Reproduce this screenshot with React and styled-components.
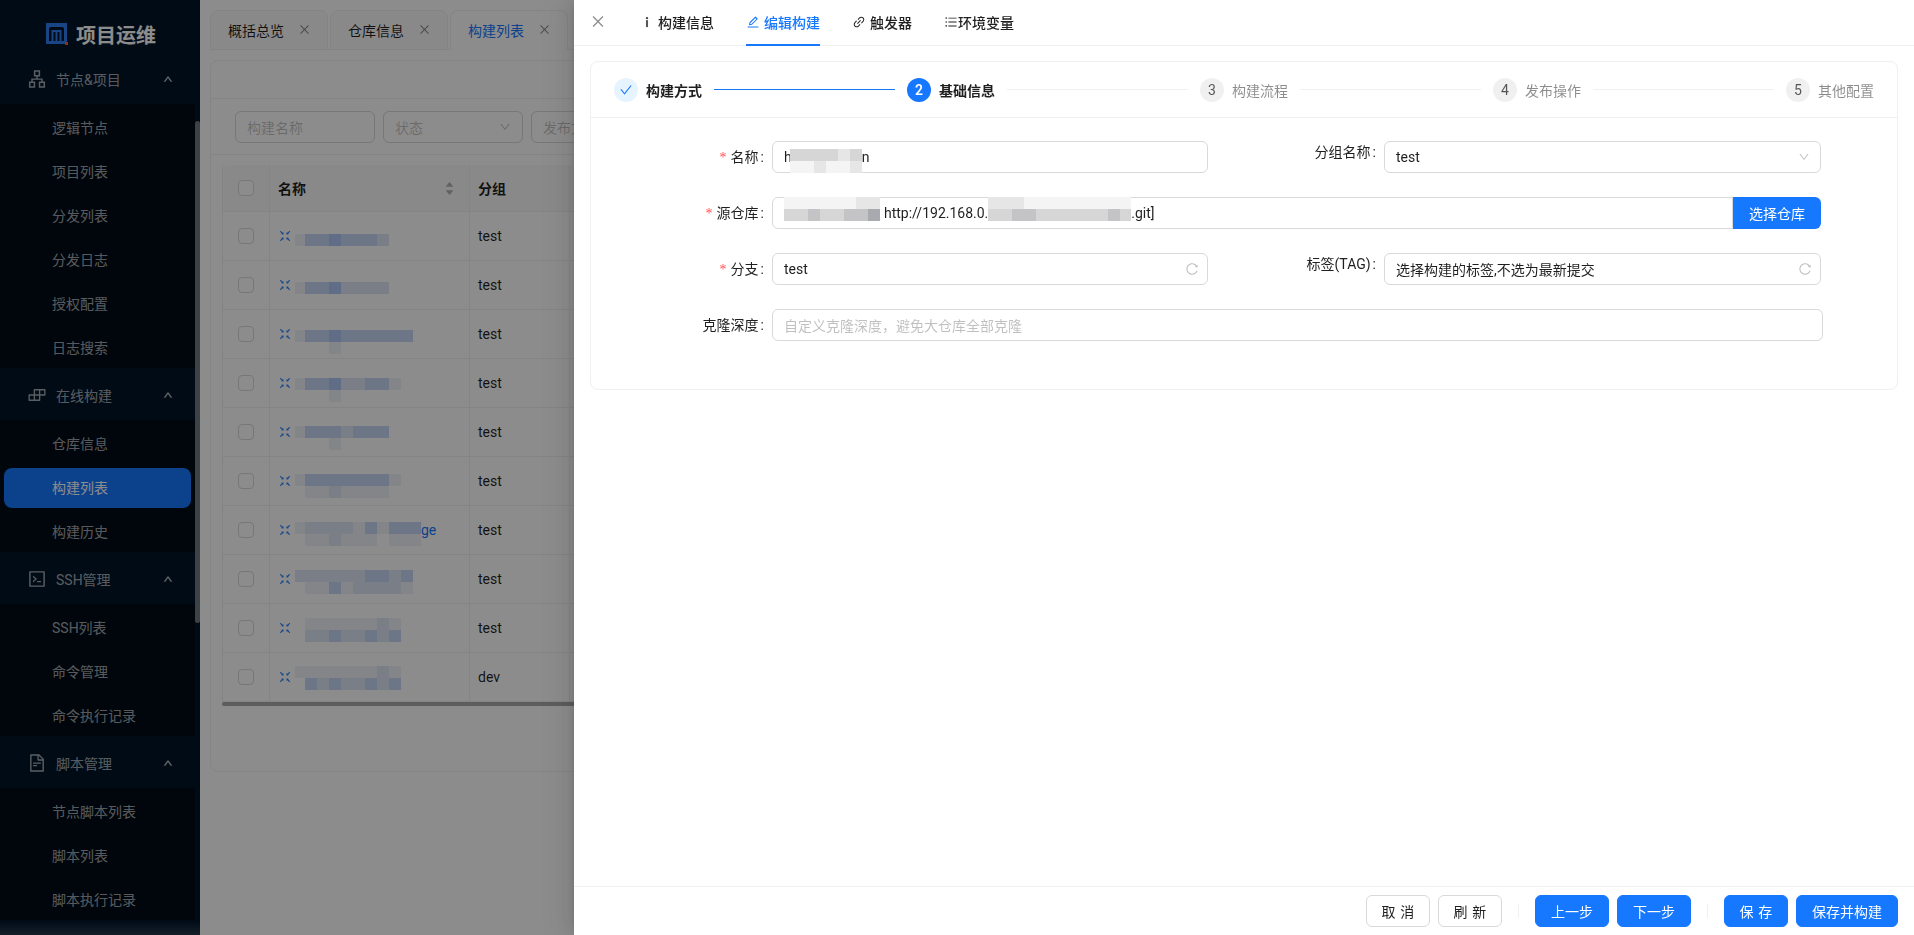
import styled, { createGlobalStyle } from "styled-components";
import {
  AiOutlineApartment,
  AiOutlineBuild,
  AiOutlineCheck,
  AiOutlineClose,
  AiOutlineCode,
  AiOutlineDown,
  AiOutlineEdit,
  AiOutlineFileText,
  AiOutlineFullscreenExit,
  AiOutlineInfo,
  AiOutlineLink,
  AiOutlineReload,
  AiOutlineUnorderedList,
  AiOutlineUp,
  AiFillCaretUp,
  AiFillCaretDown,
} from "react-icons/ai";

const GlobalStyle = createGlobalStyle`
  html, body {
    margin: 0;
    padding: 0;
    height: 100%;
    overflow: hidden;
    background: #fff;
    font-family: Roboto, "Noto Sans CJK SC", sans-serif;
    font-size: 14px;
    color: rgba(0, 0, 0, 0.88);
  }
  * {
    box-sizing: border-box;
  }
`;

const BLUE_LEVELS = ["transparent", "#eef2fa", "#dde6f6", "#c6d7f6", "#aec6f6"];
const GRAY_LEVELS = ["transparent", "#f4f4f4", "#e6e6e6", "#d6d6d6", "#c4c4c6", "#a9a9b0"];

const menuGroups = [
  {
    title: "节点&项目",
    icon: AiOutlineApartment,
    items: ["逻辑节点", "项目列表", "分发列表", "分发日志", "授权配置", "日志搜索"],
  },
  {
    title: "在线构建",
    icon: AiOutlineBuild,
    items: ["仓库信息", "构建列表", "构建历史"],
  },
  {
    title: "SSH管理",
    icon: AiOutlineCode,
    items: ["SSH列表", "命令管理", "命令执行记录"],
  },
  {
    title: "脚本管理",
    icon: AiOutlineFileText,
    items: ["节点脚本列表", "脚本列表", "脚本执行记录"],
  },
];

const pageTabs = [
  { label: "概括总览" },
  { label: "仓库信息" },
  { label: "构建列表", active: true },
];

const tableRows = [
  { group: "test", top: 22, lines: [[1, 3, 3, 4, 3, 3, 3, 2]] },
  { group: "test", top: 21, lines: [[1, 3, 3, 4, 2, 2, 2, 2]] },
  { group: "test", top: 20, lines: [[1, 3, 3, 4, 3, 3, 3, 3, 3, 3], [0, 0, 0, 1]] },
  { group: "test", top: 19, lines: [[1, 3, 3, 4, 2, 2, 3, 3, 1], [0, 0, 0, 1]] },
  { group: "test", top: 18, lines: [[1, 3, 3, 3, 2, 3, 3, 3], [0, 0, 0, 1]] },
  { group: "test", top: 17, lines: [[1, 3, 3, 3, 3, 3, 3, 3, 1], [0, 1, 1, 2, 1, 1, 1, 1]] },
  {
    group: "test",
    top: 16,
    suffix: "ge",
    lines: [[1, 2, 2, 2, 2, 1, 3, 1, 3, 3, 3], [0, 1, 1, 2, 1, 1, 1, 0, 1, 1, 1]],
  },
  { group: "test", top: 15, lines: [[2, 2, 2, 2, 2, 2, 3, 3, 2, 3], [0, 1, 1, 3, 1, 2, 2, 2, 2, 1]] },
  { group: "test", top: 14, lines: [[0, 1, 1, 1, 1, 1, 1, 2, 1], [0, 2, 2, 3, 2, 2, 3, 2, 3]] },
  { group: "dev", top: 13, lines: [[1, 1, 1, 1, 1, 1, 1, 2, 1], [0, 3, 2, 3, 2, 2, 3, 2, 3]] },
];

const steps = [
  { title: "构建方式", status: "done" },
  { title: "基础信息", status: "active" },
  { title: "构建流程", status: "wait" },
  { title: "发布操作", status: "wait" },
  { title: "其他配置", status: "wait" },
];

const Page = styled.div`
  display: flex;
  height: 100vh;
  overflow: hidden;
`;

const Sidebar = styled.aside`
  position: relative;
  flex: 0 0 200px;
  height: 100%;
  overflow: hidden;
  background: #001529;
  &::after {
    content: "";
    position: absolute;
    left: 0;
    right: 0;
    bottom: 0;
    height: 14px;
    background: linear-gradient(to bottom, transparent, rgba(255, 255, 255, 0.16));
  }
`;

const Brand = styled.div`
  display: flex;
  align-items: center;
  height: 56px;
  padding: 12px 0 0 46px;
  gap: 8px;
  color: #fff;
  font-size: 20px;
  font-weight: 700;
`;

const Menu = styled.nav`
  width: 195px;
`;

const GroupTitle = styled.div`
  display: flex;
  align-items: center;
  height: 48px;
  padding: 0 0 2px 27px;
  color: rgba(255, 255, 255, 0.65);
  & > svg:first-child {
    font-size: 20px;
    margin-right: 9px;
  }
  span {
    flex: 1;
  }
  & > svg:last-child {
    font-size: 10px;
    margin-right: 22px;
    stroke: currentColor;
    stroke-width: 70;
  }
`;

const SubMenu = styled.div`
  padding: 4px 4px 0;
  background: #000c17;
`;

const MenuItem = styled.div`
  display: flex;
  align-items: center;
  height: 40px;
  margin-bottom: 4px;
  padding: 0 0 2px 48px;
  width: 187px;
  border-radius: 8px;
  color: ${(p) => (p.$active ? "#fff" : "rgba(255, 255, 255, 0.65)")};
  background: ${(p) => (p.$active ? "#1677ff" : "transparent")};
`;

const ScrollThumb = styled.div`
  position: absolute;
  top: 121px;
  left: 195px;
  width: 5px;
  height: 502px;
  border-radius: 3px;
  background: #6f7882;
`;

const Main = styled.main`
  flex: 1;
  min-width: 0;
  padding: 10px 0 0 10px;
`;

const TabBar = styled.div`
  display: flex;
  gap: 2px;
  height: 40px;
  border-bottom: 1px solid #f0f0f0;
`;

const PageTab = styled.div`
  display: flex;
  align-items: center;
  width: 118px;
  height: 40px;
  padding: 0 0 1px 17px;
  border: 1px solid #f0f0f0;
  border-radius: 8px 8px 0 0;
  color: ${(p) => (p.$active ? "#1677ff" : "rgba(0, 0, 0, 0.88)")};
  background: ${(p) => (p.$active ? "#fff" : "#fafafa")};
  border-bottom-color: ${(p) => (p.$active ? "#fff" : "#f0f0f0")};
  svg {
    margin-left: 14px;
    font-size: 13px;
    color: rgba(0, 0, 0, 0.45);
  }
`;

const ListCard = styled.section`
  height: 712px;
  margin-top: 10px;
  border: 1px solid #f0f0f0;
  border-radius: 8px;
  overflow: hidden;
`;

const ListHead = styled.div`
  height: 38px;
  border-bottom: 1px solid #f0f0f0;
`;

const SearchBar = styled.div`
  display: flex;
  align-items: center;
  gap: 8px;
  height: 56px;
  padding-left: 24px;
  border-bottom: 1px solid #f0f0f0;
`;

const SearchBox = styled.div`
  display: flex;
  align-items: center;
  justify-content: space-between;
  flex: 0 0 140px;
  height: 32px;
  padding: 0 11px;
  border: 1px solid #d9d9d9;
  border-radius: 6px;
  color: rgba(0, 0, 0, 0.25);
  svg {
    font-size: 12px;
  }
`;

const Table = styled.div`
  margin: 10px 0 0 11px;
  width: 700px;
`;

const HeadRow = styled.div`
  display: grid;
  grid-template-columns: 48px 200px 100px 1fr;
  height: 47px;
  background: #fafafa;
  border-radius: 8px 0 0 0;
  font-weight: 600;
  border-bottom: 1px solid #f0f0f0;
`;

const BodyRow = styled.div`
  display: grid;
  grid-template-columns: 48px 200px 100px 1fr;
  height: 49px;
  border-bottom: 1px solid #f0f0f0;
`;

const Cell = styled.div`
  display: flex;
  align-items: center;
  padding: 0 8px;
  border-right: 1px solid #f0f0f0;
  &:first-child {
    justify-content: center;
    border-left: 1px solid #f0f0f0;
  }
`;

const NameCell = styled(Cell)`
  color: #1677ff;
  font-weight: 400;
  white-space: nowrap;
  & > svg:first-child {
    flex: 0 0 auto;
    font-size: 14px;
    margin-right: 3px;
  }
`;

const SortIcons = styled.span`
  display: flex;
  flex-direction: column;
  margin-left: auto;
  margin-right: 6px;
  font-size: 11px;
  line-height: 0;
  color: rgba(0, 0, 0, 0.29);
  svg + svg {
    margin-top: -3px;
  }
`;

const Checkbox = styled.span`
  display: block;
  width: 16px;
  height: 16px;
  border: 1px solid #d9d9d9;
  border-radius: 4px;
  background: #fff;
`;

const TableScroll = styled.div`
  height: 4px;
  border-radius: 2px;
  background: #a9a9a9;
`;

const MosaicSvg = styled.svg`
  display: block;
  flex: 0 0 auto;
  margin-top: ${(p) => p.$offset || 0}px;
  margin-left: ${(p) => p.$shift || 0}px;
  align-self: ${(p) => (p.$alignTop ? "flex-start" : "auto")};
`;

// blurred out text in the reference: rows of 12px blocks
const Mosaic = ({ lines, top = 0, width, height, levels, firstX = 0, offset, shift, alignTop }) => (
  <MosaicSvg width={width} height={height} $offset={offset} $shift={shift} $alignTop={alignTop}>
    {lines.map((line, row) =>
      line.map((level, col) =>
        level ? (
          <rect
            key={`${row}-${col}`}
            x={firstX + col * 12}
            y={top + row * 12}
            width="12"
            height="12"
            fill={levels[level]}
          />
        ) : null
      )
    )}
  </MosaicSvg>
);

const Mask = styled.div`
  position: fixed;
  inset: 0;
  background: rgba(0, 0, 0, 0.45);
`;

const Drawer = styled.div`
  position: fixed;
  top: 0;
  right: 0;
  bottom: 0;
  width: 1340px;
  display: flex;
  flex-direction: column;
  background: #fff;
  box-shadow: -6px 0 16px 0 rgba(0, 0, 0, 0.08), -3px 0 6px -4px rgba(0, 0, 0, 0.12),
    -9px 0 28px 8px rgba(0, 0, 0, 0.05);
`;

const DrawerHead = styled.header`
  display: flex;
  align-items: flex-start;
  flex: 0 0 46px;
  padding-left: 16px;
  border-bottom: 1px solid #f0f0f0;
`;

const CloseButton = styled.span`
  display: flex;
  align-items: center;
  width: 16px;
  height: 45px;
  margin-right: 38px;
  padding-bottom: 2px;
  font-size: 17px;
  color: rgba(0, 0, 0, 0.45);
`;

const DrawerTab = styled.div`
  display: flex;
  align-items: center;
  height: 46px;
  margin: 0 32px -1px 0;
  font-weight: 500;
  color: ${(p) => (p.$active ? "#1677ff" : "rgba(0, 0, 0, 0.88)")};
  border-bottom: 2px solid ${(p) => (p.$active ? "#1677ff" : "transparent")};
  svg {
    font-size: 14px;
    margin-right: ${(p) => (p.$tight ? 0 : 4)}px;
  }
`;

const InfoIcon = styled(AiOutlineInfo)`
  transform: translateX(-4px);
  stroke: currentColor;
  stroke-width: 30;
`;

const DrawerBody = styled.div`
  flex: 1;
  padding: 15px 16px 0;
`;

const EditCard = styled.section`
  border: 1px solid #f0f0f0;
  border-radius: 8px;
`;

const StepsBar = styled.div`
  display: flex;
  align-items: center;
  height: 56px;
  padding: 0 23px;
  border-bottom: 1px solid #f0f0f0;
`;

const Step = styled.div`
  display: flex;
  align-items: center;
  flex: ${(p) => (p.$last ? "0 0 auto" : "1")};
`;

const StepDot = styled.span`
  display: flex;
  align-items: center;
  justify-content: center;
  flex: 0 0 24px;
  height: 24px;
  margin-right: 8px;
  border-radius: 50%;
  font-size: 14px;
  font-weight: ${(p) => (p.$status === "active" ? 600 : 400)};
  color: ${(p) =>
    p.$status === "done" ? "#1677ff" : p.$status === "active" ? "#fff" : "rgba(0, 0, 0, 0.65)"};
  background: ${(p) =>
    p.$status === "done" ? "#e6f4ff" : p.$status === "active" ? "#1677ff" : "rgba(0, 0, 0, 0.06)"};
`;

const StepTitle = styled.span`
  font-weight: ${(p) => (p.$status === "wait" ? 400 : 600)};
  color: ${(p) => (p.$status === "wait" ? "rgba(0, 0, 0, 0.45)" : "rgba(0, 0, 0, 0.88)")};
  white-space: nowrap;
`;

const StepLine = styled.span`
  flex: 1;
  height: 1px;
  margin: 0 12px;
  background: ${(p) => (p.$status === "done" ? "#1677ff" : "rgba(5, 5, 5, 0.06)")};
`;

const Form = styled.div`
  padding: 23px 23px 24px;
`;

const FormRow = styled.div`
  display: flex;
  align-items: flex-start;
  height: 32px;
  margin-bottom: 24px;
`;

const Label = styled.label`
  flex: 0 0 ${(p) => p.$width}px;
  margin-right: 8px;
  text-align: right;
  white-space: nowrap;
  line-height: ${(p) => (p.$top ? 22 : 32)}px;
  &::after {
    content: ":";
    margin-left: 2px;
  }
`;

const Required = styled.span`
  margin-right: 4px;
  color: #ff4d4f;
  font-family: "Liberation Serif", serif;
`;

const Field = styled.div`
  display: flex;
  align-items: center;
  flex: 0 0 ${(p) => p.$width}px;
  height: 32px;
  padding: 0 11px;
  border: 1px solid #d9d9d9;
  border-radius: ${(p) => (p.$joined ? "6px 0 0 6px" : "6px")};
  white-space: nowrap;
`;

const FieldIcon = styled.span`
  display: flex;
  margin-left: auto;
  margin-right: ${(p) => (p.$small ? -1 : -3)}px;
  font-size: ${(p) => (p.$small ? 12 : 14)}px;
  color: rgba(0, 0, 0, 0.25);
`;

const Placeholder = styled.span`
  color: rgba(0, 0, 0, 0.25);
`;

const PickButton = styled.button`
  flex: 0 0 88px;
  height: 32px;
  padding: 0;
  border: 0;
  border-radius: 0 6px 6px 0;
  color: #fff;
  background: #1677ff;
  font: inherit;
`;

const Footer = styled.footer`
  display: flex;
  justify-content: flex-end;
  align-items: center;
  gap: 8px;
  flex: 0 0 49px;
  padding: 0 16px;
  border-top: 1px solid #f0f0f0;
`;

const Button = styled.button`
  width: ${(p) => p.$width}px;
  height: 32px;
  padding: 0;
  border: 1px solid ${(p) => (p.$primary ? "#1677ff" : "#d9d9d9")};
  border-radius: 6px;
  color: ${(p) => (p.$primary ? "#fff" : "rgba(0, 0, 0, 0.88)")};
  background: ${(p) => (p.$primary ? "#1677ff" : "#fff")};
  font: inherit;
  white-space: nowrap;
  letter-spacing: ${(p) => (p.$spaced ? "0.34em" : "normal")};
  text-indent: ${(p) => (p.$spaced ? "0.34em" : 0)};
`;

const FooterDivider = styled.span`
  width: 1px;
  height: 14px;
  margin: 0 8px;
  background: rgba(5, 5, 5, 0.06);
`;

const Logo = () => (
  <svg width="22" height="22" viewBox="0 0 22 22">
    <rect width="21" height="21" fill="#2f7ff0" />
    <path d="M3 18V6a2 2 0 0 1 2-2h11a2 2 0 0 1 2 2v12z" fill="#001529" />
    <path d="M6.5 18V8h8v10M10.5 8v10" fill="none" stroke="#2f7ff0" strokeWidth="2" />
    <rect x="19" y="19" width="3" height="3" fill="#ff5a1f" />
  </svg>
);

export default function App() {
  return (
    <>
      <GlobalStyle />
      <Page>
        <Sidebar>
          <Brand>
            <Logo />
            项目运维
          </Brand>
          <Menu>
            {menuGroups.map((group) => (
              <div key={group.title}>
                <GroupTitle>
                  <group.icon />
                  <span>{group.title}</span>
                  <AiOutlineUp />
                </GroupTitle>
                <SubMenu>
                  {group.items.map((item) => (
                    <MenuItem key={item} $active={item === "构建列表"}>
                      {item}
                    </MenuItem>
                  ))}
                </SubMenu>
              </div>
            ))}
          </Menu>
          <ScrollThumb />
        </Sidebar>
        <Main>
          <TabBar>
            {pageTabs.map((tab) => (
              <PageTab key={tab.label} $active={tab.active}>
                {tab.label}
                <AiOutlineClose />
              </PageTab>
            ))}
          </TabBar>
          <ListCard>
            <ListHead />
            <SearchBar>
              <SearchBox>构建名称</SearchBox>
              <SearchBox>
                状态
                <AiOutlineDown />
              </SearchBox>
              <SearchBox>发布方式</SearchBox>
            </SearchBar>
            <Table>
              <HeadRow>
                <Cell>
                  <Checkbox />
                </Cell>
                <Cell>
                  名称
                  <SortIcons>
                    <AiFillCaretUp />
                    <AiFillCaretDown />
                  </SortIcons>
                </Cell>
                <Cell>分组</Cell>
                <Cell />
              </HeadRow>
              {tableRows.map((row, idx) => (
                <BodyRow key={idx}>
                  <Cell>
                    <Checkbox />
                  </Cell>
                  <NameCell>
                    <AiOutlineFullscreenExit />
                    <Mosaic
                      lines={row.lines}
                      top={row.top}
                      width={row.suffix ? 126 : 130}
                      height={48}
                      levels={BLUE_LEVELS}
                      firstX={-2}
                    />
                    {row.suffix}
                  </NameCell>
                  <Cell>{row.group}</Cell>
                  <Cell />
                </BodyRow>
              ))}
              <TableScroll />
            </Table>
          </ListCard>
        </Main>
      </Page>
      <Mask />
      <Drawer>
        <DrawerHead>
          <CloseButton>
            <AiOutlineClose />
          </CloseButton>
          <DrawerTab $tight>
            <InfoIcon />
            构建信息
          </DrawerTab>
          <DrawerTab $active>
            <AiOutlineEdit />
            编辑构建
          </DrawerTab>
          <DrawerTab>
            <AiOutlineLink />
            触发器
          </DrawerTab>
          <DrawerTab $tight>
            <AiOutlineUnorderedList />
            环境变量
          </DrawerTab>
        </DrawerHead>
        <DrawerBody>
          <EditCard>
            <StepsBar>
              {steps.map((step, idx) => {
                const last = idx === steps.length - 1;
                return (
                  <Step key={step.title} $last={last}>
                    <StepDot $status={step.status}>
                      {step.status === "done" ? <AiOutlineCheck size={14} /> : idx + 1}
                    </StepDot>
                    <StepTitle $status={step.status}>{step.title}</StepTitle>
                    {!last && <StepLine $status={step.status} />}
                  </Step>
                );
              })}
            </StepsBar>
            <Form>
              <FormRow>
                <Label $width={150}>
                  <Required>*</Required>名称
                </Label>
                <Field $width={436}>
                  h
                  <Mosaic
                    lines={[
                      [3, 3, 3, 3, 2, 3],
                      [1, 1, 2, 1, 1, 2],
                    ]}
                    width={72}
                    height={24}
                    levels={GRAY_LEVELS}
                    offset={7}
                    shift={-2}
                    alignTop
                  />
                  n
                </Field>
                <Label $width={168} $top>
                  分组名称
                </Label>
                <Field $width={437}>
                  test
                  <FieldIcon $small>
                    <AiOutlineDown />
                  </FieldIcon>
                </Field>
              </FormRow>
              <FormRow>
                <Label $width={150}>
                  <Required>*</Required>源仓库
                </Label>
                <Field $width={961} $joined>
                  <Mosaic
                    lines={[
                      [1, 1, 1, 1, 1, 1, 2, 2],
                      [3, 3, 4, 3, 3, 4, 4, 5],
                    ]}
                    width={100}
                    height={24}
                    levels={GRAY_LEVELS}
                    offset={-1}
                    alignTop
                  />
                  http://192.168.0.
                  <Mosaic
                    lines={[
                      [2, 2, 2, 1, 1, 1, 1, 1, 1, 1, 1, 1],
                      [3, 3, 4, 4, 3, 3, 3, 3, 3, 3, 4, 3],
                    ]}
                    width={143}
                    height={24}
                    levels={GRAY_LEVELS}
                    offset={-1}
                    alignTop
                  />
                  .git]
                </Field>
                <PickButton>选择仓库</PickButton>
              </FormRow>
              <FormRow>
                <Label $width={150}>
                  <Required>*</Required>分支
                </Label>
                <Field $width={436}>
                  test
                  <FieldIcon>
                    <AiOutlineReload />
                  </FieldIcon>
                </Field>
                <Label $width={168} $top>
                  标签(TAG)
                </Label>
                <Field $width={437}>
                  选择构建的标签,不选为最新提交
                  <FieldIcon>
                    <AiOutlineReload />
                  </FieldIcon>
                </Field>
              </FormRow>
              <FormRow>
                <Label $width={150}>克隆深度</Label>
                <Field $width={1051}>
                  <Placeholder>自定义克隆深度，避免大仓库全部克隆</Placeholder>
                </Field>
              </FormRow>
            </Form>
          </EditCard>
        </DrawerBody>
        <Footer>
          <Button $width={64} $spaced>
            取消
          </Button>
          <Button $width={64} $spaced>
            刷新
          </Button>
          <FooterDivider />
          <Button $width={74} $primary>
            上一步
          </Button>
          <Button $width={74} $primary>
            下一步
          </Button>
          <FooterDivider />
          <Button $width={64} $primary $spaced>
            保存
          </Button>
          <Button $width={102} $primary>
            保存并构建
          </Button>
        </Footer>
      </Drawer>
    </>
  );
}
